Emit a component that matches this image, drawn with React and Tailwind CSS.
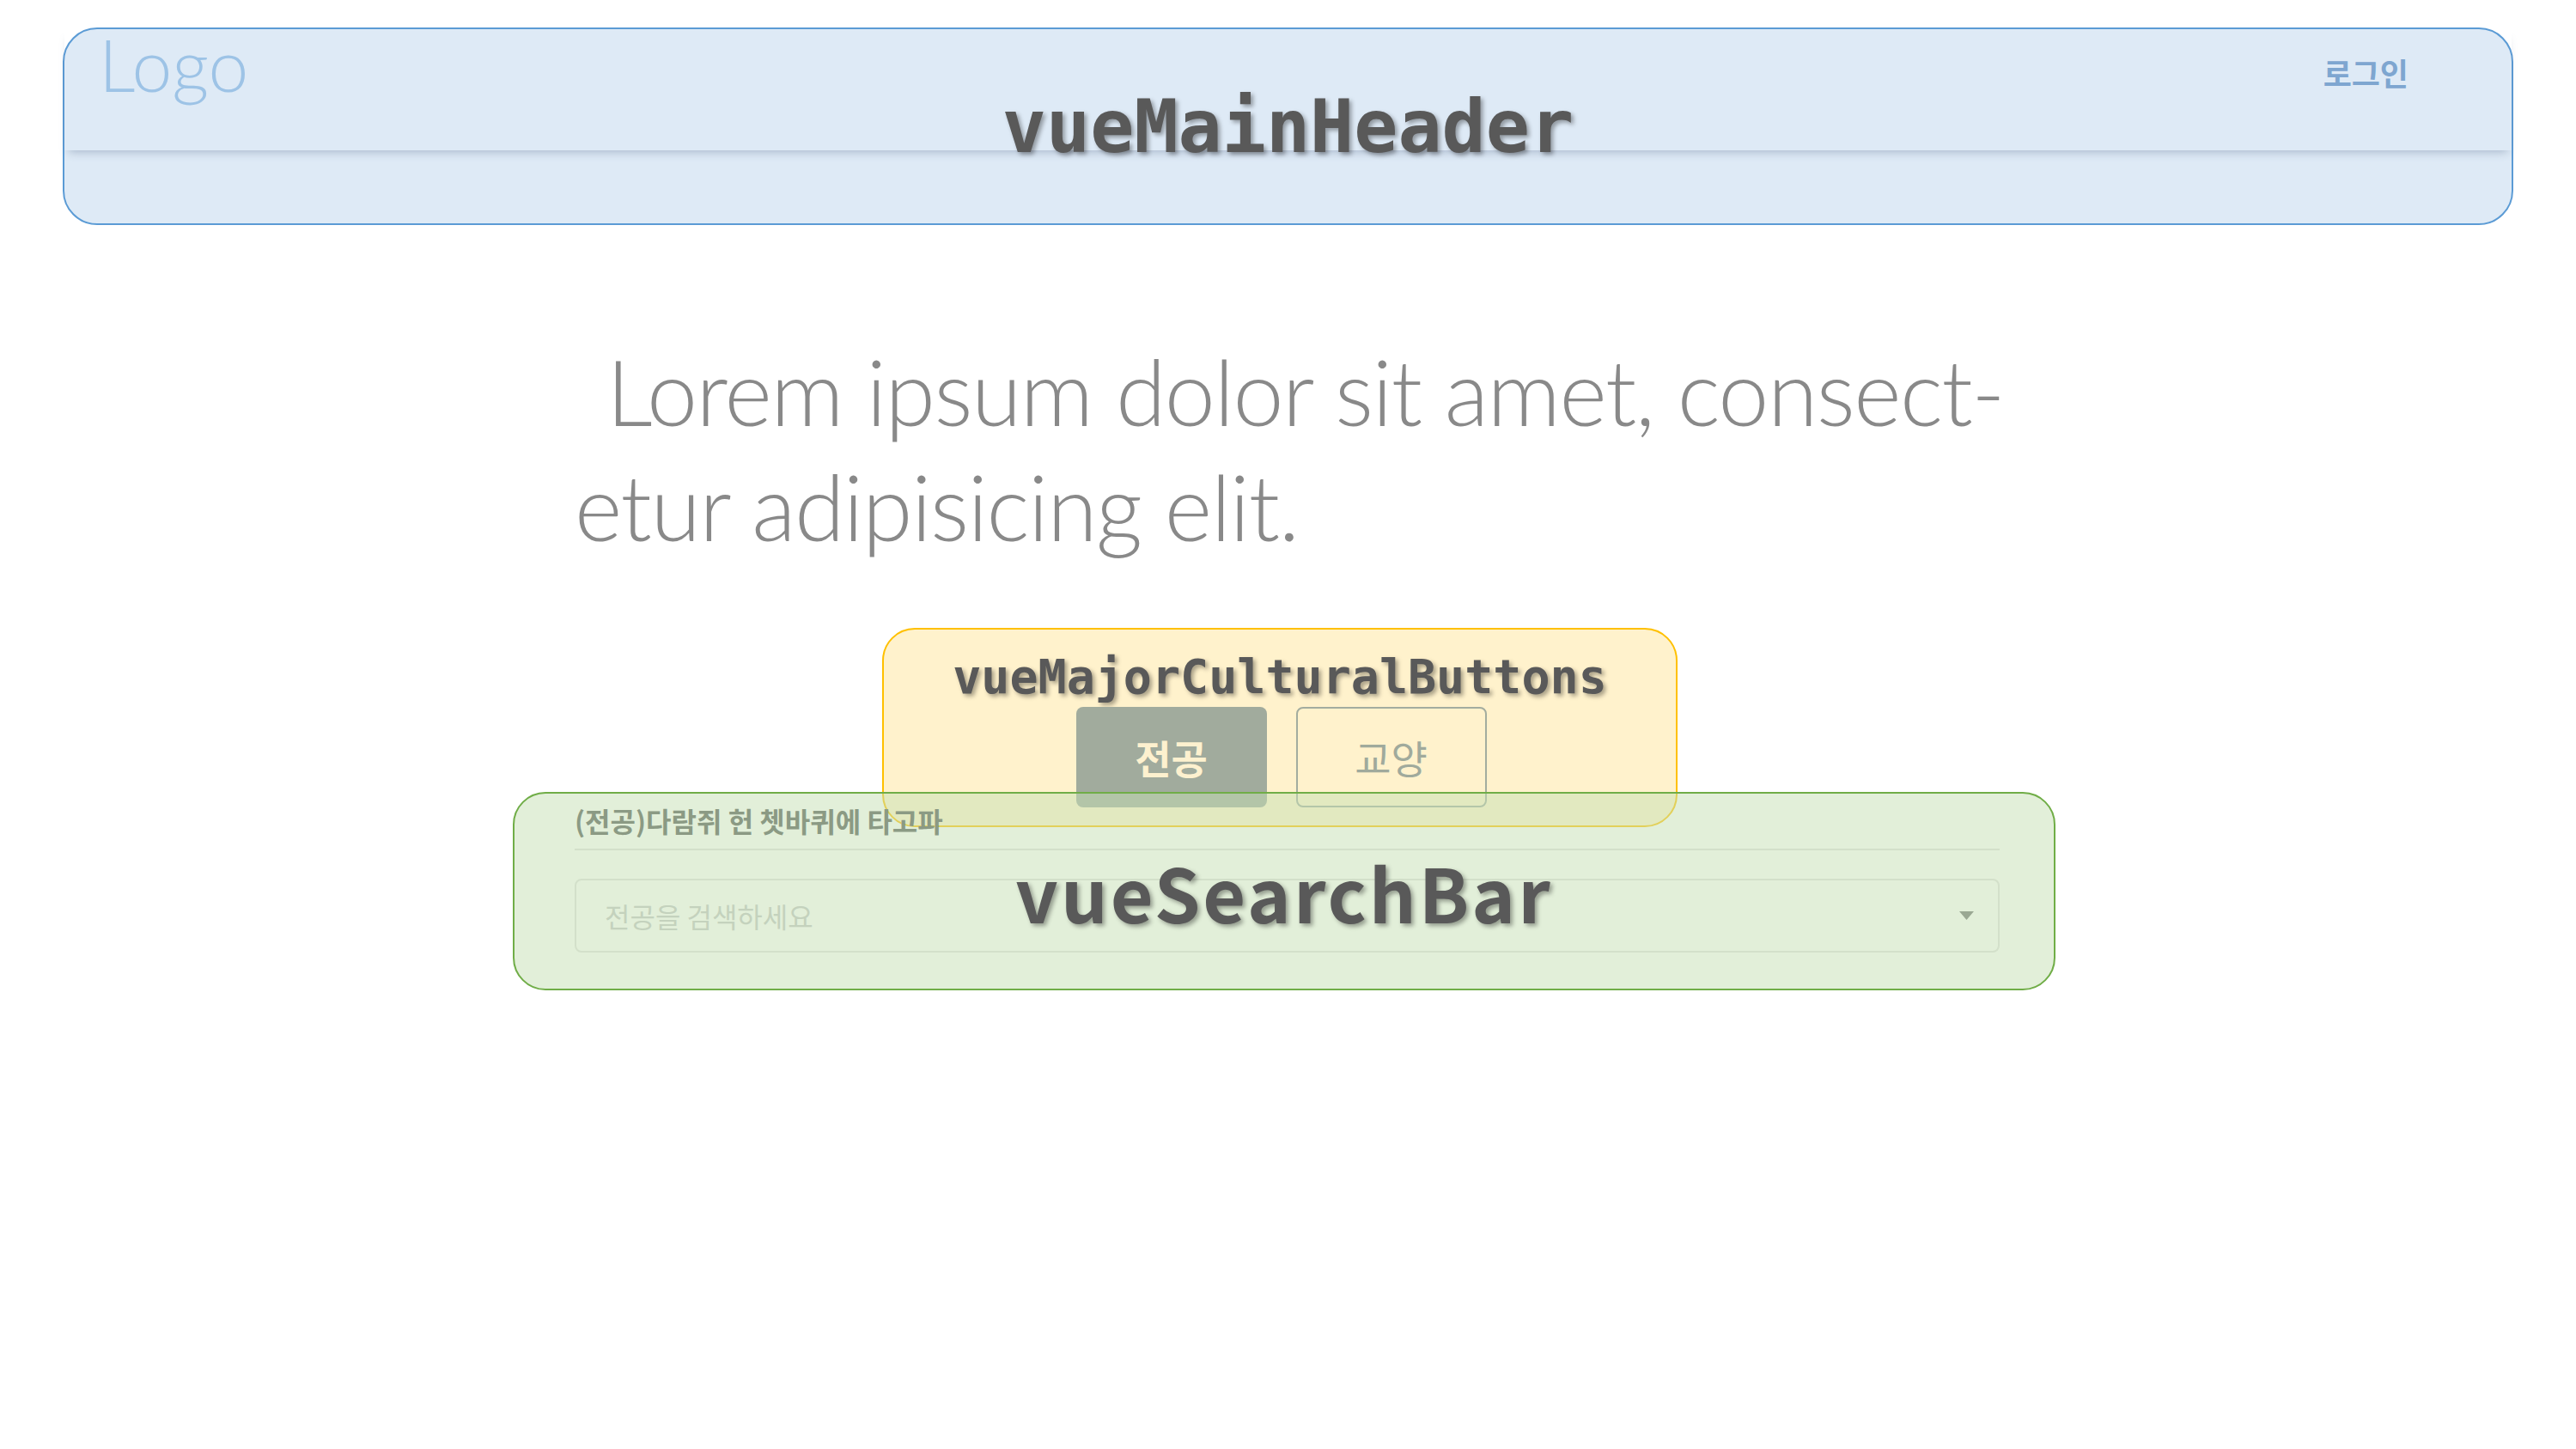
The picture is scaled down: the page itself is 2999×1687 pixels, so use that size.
const kr = { fontFamily: '"Noto Sans CJK KR", "Noto Sans", sans-serif' };
const mono = { fontFamily: '"DejaVu Sans Mono", "Liberation Mono", monospace' };
const light = { fontFamily: 'Lato, "Open Sans", sans-serif' };

const labelShadow = '[text-shadow:3px_3px_5px_rgba(0,0,0,0.35)]';

const MainHeader = () => (
    <div className="relative mx-[73px] mt-[32px] h-[230px] rounded-[40px] border-2 border-[#5b9bd5] bg-[#deeaf6]">
        <div className="flex items-start justify-between h-[141px] pl-[40px] pr-[120px] shadow-[0_7px_10px_-5px_rgba(90,110,140,0.4)]">
            <span className="mt-[1px] text-[84px] leading-[80px] font-light text-[#9dc3e6]" style={light}>Logo</span>
            <span className="mt-[32px] text-[36px] leading-none font-semibold text-[#7ea6d0]" style={kr}>로그인</span>
        </div>
        <div className="absolute inset-0 flex items-center justify-center pointer-events-none">
            <span className={`text-[85px] leading-none font-bold text-[#595959] ${labelShadow}`} style={mono}>vueMainHeader</span>
        </div>
    </div>
);

const MajorCulturalButtons = () => (
    <div className="relative ml-[360px] w-[926px] h-[232px] rounded-[38px] border-2 border-[#ffc000] bg-[#fff2cc] flex flex-col items-center pt-[28px]">
        <span className={`text-[55px] leading-none font-bold text-[#595959] ${labelShadow}`} style={mono}>vueMajorCulturalButtons</span>
        <div className="flex gap-[34px] mt-[7px] ml-[3px]">
            <button className="w-[222px] h-[117px] rounded-[8px] bg-[#a1ab9d] text-[46px] font-bold text-[#fdf1cf]" style={kr}>전공</button>
            <button className="w-[222px] h-[117px] rounded-[8px] border-2 border-[#a3ad9f] text-[46px] text-[#a0aa9c]" style={kr}>교양</button>
        </div>
    </div>
);

const SearchBar = () => (
    <div className="relative -mt-[41px] ml-[597px] w-[1796px] h-[231px] rounded-[38px] border-2 border-[#70ad47] bg-[rgba(197,224,180,0.5)] pl-[70px] pr-[63px] pt-[15px]">
        <p className="text-[32px] leading-none font-bold text-[#8b9a84]" style={kr}>(전공)다람쥐 헌 쳇바퀴에 타고파</p>
        <div className="mt-[17px] h-[2px] bg-[#d3e0ca]" />
        <div className="mt-[33px] h-[86px] rounded-[8px] border-2 border-[#d3e0ca] flex items-center justify-between pl-[33px] pr-[28px]">
            <span className="text-[32px] text-[#c4d2bd]" style={kr}>전공을 검색하세요</span>
            <svg width="17" height="10" viewBox="0 0 17 10"><path d="M0 0 L17 0 L8.5 10 Z" fill="#9aa893" /></svg>
        </div>
        <div className="absolute inset-0 flex items-center justify-center pointer-events-none">
            <span className={`text-[86px] leading-none font-bold tracking-[3px] text-[#595959] ${labelShadow}`} style={kr}>vueSearchBar</span>
        </div>
    </div>
);

const App = () => {
    return (
        <div className="min-h-[1687px] w-[2999px] bg-white">
            <MainHeader />

            <div className="mx-auto w-[1661px] mt-[126px] text-[106px] leading-[134px] tracking-[-1.5px] font-light text-[#898989] whitespace-nowrap" style={light}>
                <p className="pl-[37px]">Lorem ipsum dolor sit amet, consect-</p>
                <p>etur adipisicing elit.</p>
            </div>

            <div className="mt-[75px]">
                <div className="ml-[667px]">
                    <MajorCulturalButtons />
                </div>
                <SearchBar />
            </div>
        </div>
    );
};

export default App;
